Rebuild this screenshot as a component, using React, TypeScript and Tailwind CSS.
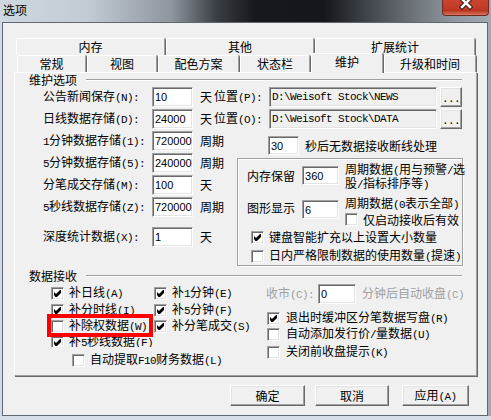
import React from "react";

function T({ s, className = "" }: { s: string; className?: string }) {
  const parts = s.split(/([\x20-\x7e]+)/).filter((p) => p.length > 0);
  return (
    <span className={"whitespace-pre " + className}>
      {parts.map((p, i) =>
        /^[\x20-\x7e]+$/.test(p) ? (
          <span key={i} className="font-['Liberation_Mono',monospace] text-[11px] tracking-[-0.6px]">
            {p}
          </span>
        ) : (
          <span key={i}>{p}</span>
        )
      )}
    </span>
  );
}

function Box({ checked }: { checked?: boolean }) {
  return (
    <span className="w-[13px] h-[13px] shrink-0 bg-white border border-t-[#a0a0a0] border-l-[#a0a0a0] border-r-white border-b-white shadow-[inset_1px_1px_0_#696969,inset_-1px_-1px_0_#e3e3e3] flex items-center justify-center">
      {checked && (
        <svg width="7" height="7" viewBox="0 0 7 7" className="block">
          <path d="M0 2 L2 4 L6 0 L7 0 L7 3 L2 8 L0 5 Z" fill="#000" />
        </svg>
      )}
    </span>
  );
}

function Chk({
  checked,
  label,
  className = "",
  gap = "ml-[5px]",
}: {
  checked?: boolean;
  label: string;
  className?: string;
  gap?: string;
}) {
  return (
    <div className={"flex items-center " + className}>
      <Box checked={checked} />
      <T s={label} className={gap} />
    </div>
  );
}

function Field({
  v,
  className = "",
  bg = "bg-white",
  mono = false,
}: {
  v: string;
  className?: string;
  bg?: string;
  mono?: boolean;
}) {
  return (
    <div
      className={
        "shrink-0 flex items-center pl-[2px] overflow-hidden border border-t-[#a0a0a0] border-l-[#a0a0a0] border-r-white border-b-white shadow-[inset_1px_1px_0_#696969,inset_-1px_-1px_0_#e3e3e3] text-black " +
        (mono
          ? "font-['Liberation_Mono',monospace] text-[11px] tracking-[-0.6px] whitespace-pre "
          : "font-['Liberation_Sans',sans-serif] text-[11px] ") +
        bg +
        " " +
        className
      }
    >
      {v}
    </div>
  );
}

function Btn({ children, className = "" }: { children: React.ReactNode; className?: string }) {
  return (
    <div
      className={
        "shrink-0 flex items-center justify-center bg-[#f0f0f0] border border-t-white border-l-white border-r-[#696969] border-b-[#696969] shadow-[inset_-1px_-1px_0_#a0a0a0,inset_1px_1px_0_#e3e3e3] " +
        className
      }
    >
      {children}
    </div>
  );
}

function Tab({ label, className = "" }: { label: string; className?: string }) {
  return (
    <div
      className={
        "shrink-0 flex justify-center pt-[1px] leading-[14px] border-t border-l border-r border-t-white border-l-white border-r-[#a0a0a0] shadow-[1px_0_0_#696969] rounded-t-[2px] " +
        className
      }
    >
      <T s={label} />
    </div>
  );
}

function GroupLabel({ text, className = "" }: { text: string; className?: string }) {
  return (
    <div className={"flex items-center h-[14px] pl-[14px] pr-[14px] " + className}>
      <T s={text} />
      <div className="ml-[9px] flex-1 h-[2px] border-t border-t-[#a0a0a0] border-b border-b-white" />
    </div>
  );
}

function Row({
  label,
  value,
  unit,
  className = "",
}: {
  label: string;
  value: string;
  unit: string;
  className?: string;
}) {
  return (
    <div className={"flex items-center h-[20px] " + className}>
      <T s={label} className="w-[109px] shrink-0" />
      <Field v={value} className="w-[41px] h-[20px]" />
      <span className="ml-[7px]">{unit}</span>
    </div>
  );
}

export default function App() {
  return (
    <div className="relative w-[491px] h-[420px] overflow-hidden flex flex-col font-['Noto_Sans_CJK_SC',sans-serif] text-[12px] leading-[14px] text-black select-none">
      {/* title bar */}
      <div className="h-[22px] shrink-0 flex items-start bg-[linear-gradient(90deg,#d0d8df_0%,#c2cad2_18%,#8e959c_35%,#3a3f45_44%,#15181c_52%,#14171b_66%,#3c4147_74%,#6c7278_84%,#8e959c_92%,#a2aab2_100%)]">
        <span className="ml-[3px] mt-[3px]">选项</span>
        <div className="ml-auto mr-[2px] w-[47px] h-[16px] rounded-b-[4px] border border-t-0 border-[#6e2a20] bg-[linear-gradient(180deg,#c9452f_0%,#c23a26_55%,#b9341f_70%,#d8765e_100%)] flex items-start justify-center">
          <svg width="14" height="10" viewBox="0 0 14 10" className="block">
            <path d="M3 -1 L11 7 M11 -1 L3 7" stroke="#3c1810" strokeWidth="4.5" strokeLinecap="square" />
            <path d="M3 -1 L11 7 M11 -1 L3 7" stroke="#ffffff" strokeWidth="2.5" strokeLinecap="square" />
          </svg>
        </div>
      </div>

      <div className="flex flex-1 min-h-0">
        <div className="w-[2px] shrink-0 bg-[#d3dce5]" />
        <div className="flex-1 flex flex-col border border-[#5f6770] bg-[#f0f0f0] pt-[15px]">
          {/* tab control */}
          <div className="ml-[11px] w-[464px] flex flex-col">
            <div className="flex h-[17px] pl-[2px]">
              <Tab label="内存" className="w-[149px] h-[17px]" />
              <Tab label="其他" className="ml-[1px] w-[148px] h-[17px]" />
              <Tab label="扩展统计" className="ml-[1px] w-[160px] h-[17px]" />
            </div>
            <div className="flex items-end h-[17px] pl-[3px]">
              <Tab label="常规" className="w-[69px] h-[17px]" />
              <Tab label="视图" className="ml-[1px] w-[70px] h-[17px]" />
              <Tab label="配色方案" className="ml-[1px] w-[81px] h-[17px]" />
              <Tab label="状态栏" className="ml-[1px] w-[70px] h-[17px]" />
              <Tab label="维护" className="relative z-10 -mb-px ml-[1px] w-[72px] h-[20px] bg-[#f0f0f0]" />
              <Tab label="升级和时间" className="ml-[1px] w-[92px] h-[17px]" />
            </div>

            {/* panel */}
            <div className="w-[463px] h-[304px] border border-t-white border-l-white border-r-[#a0a0a0] border-b-[#a0a0a0] shadow-[1px_1px_0_#696969] flex flex-col">
              <GroupLabel text="维护选项" />

              <div className="flex flex-col pl-[28px]">
                {/* row 1 */}
                <div className="flex items-center h-[20px]">
                  <T s="公告新闻保存(N):" className="w-[109px] shrink-0" />
                  <Field v="10" className="w-[41px] h-[20px]" />
                  <span className="ml-[7px]">天</span>
                  <T s="位置(P):" className="ml-[2px]" />
                  <Field v={"D:\\Weisoft Stock\\NEWS"} mono bg="bg-[#f0f0f0]" className="ml-[7px] w-[168px] h-[20px]" />
                  <Btn className="ml-[3px] w-[22px] h-[20px]">
                    <span className="font-['Liberation_Mono',monospace] text-[11px] tracking-[-0.6px] mt-[3px]">...</span>
                  </Btn>
                </div>
                {/* row 2 */}
                <div className="flex items-center h-[20px] mt-[2px]">
                  <T s="日线数据存储(D):" className="w-[109px] shrink-0" />
                  <Field v="24000" className="w-[41px] h-[20px]" />
                  <span className="ml-[7px]">天</span>
                  <T s="位置(O):" className="ml-[2px]" />
                  <Field v={"D:\\Weisoft Stock\\DATA"} mono bg="bg-[#f0f0f0]" className="ml-[7px] w-[168px] h-[20px]" />
                  <Btn className="ml-[3px] w-[22px] h-[20px]">
                    <span className="font-['Liberation_Mono',monospace] text-[11px] tracking-[-0.6px] mt-[3px]">...</span>
                  </Btn>
                </div>

                {/* section B */}
                <div className="flex mt-[2px]">
                  <div className="w-[194px] shrink-0 flex flex-col">
                    <Row label="1分钟数据存储(1):" value="720000" unit="周期" />
                    <Row label="5分钟数据存储(5):" value="240000" unit="周期" className="mt-[2px]" />
                    <Row label="分笔成交存储(M):" value="100" unit="天" className="mt-[2px]" />
                    <Row label="5秒线数据存储(Z):" value="720000" unit="周期" className="mt-[2px]" />
                    <Row label="深度统计数据(X):" value="1" unit="天" className="mt-[10px]" />
                  </div>
                  <div className="w-[226px] shrink-0 flex flex-col">
                    <div className="flex items-center mt-[5px] ml-[31px]">
                      <Field v="30" className="w-[31px] h-[19px]" />
                      <T s="秒后无数据接收断线处理" className="ml-[6px]" />
                    </div>
                    <div className="mt-[3px] h-[108px] border border-[#a0a0a0] shadow-[inset_1px_1px_0_#ffffff,1px_1px_0_#ffffff] flex flex-col pl-[9px]">
                      <div className="flex items-start mt-[7px]">
                        <T s="内存保留" className="mt-[3px]" />
                        <Field v="360" className="ml-[7px] w-[37px] h-[19px]" />
                        <div className="ml-[6px] -mt-[3px] flex flex-col leading-[12px] whitespace-nowrap">
                          <T s="周期数据(用与预警/选" />
                          <T s="股/指标排序等)" />
                        </div>
                      </div>
                      <div className="flex items-start mt-[6px]">
                        <T s="图形显示" className="mt-[4px]" />
                        <Field v="6" className="ml-[7px] mt-[3px] w-[37px] h-[19px]" />
                        <div className="ml-[6px] flex flex-col whitespace-nowrap">
                          <T s="周期数据(0表示全部)" className="leading-[12px]" />
                          <Chk label="仅启动接收后有效" className="mt-[2px] h-[13px]" gap="ml-[5px]" />
                        </div>
                      </div>
                      <Chk checked label="键盘智能扩充以上设置大小数量" className="mt-[4px] h-[14px] pl-[4px]" />
                      <Chk label="日内严格限制数据的使用数量(提速)" className="mt-[5px] h-[14px] pl-[4px]" />
                    </div>
                  </div>
                </div>
              </div>

              <GroupLabel text="数据接收" className="mt-[3px]" />

              <div className="flex pl-[36px]">
                <div className="w-[215px] shrink-0 flex flex-col">
                  <div className="flex h-[16px] mt-[2px]">
                    <Chk checked label="补日线(A)" className="w-[103px]" />
                    <Chk checked label="补1分钟(E)" />
                  </div>
                  <div className="flex h-[16px] mt-[1px]">
                    <Chk checked label="补分时线(I)" className="w-[103px]" />
                    <Chk checked label="补5分钟(F)" />
                  </div>
                  <div className="flex h-[16px]">
                    <Chk label="补除权数据(W)" className="w-[103px]" />
                    <Chk checked label="补分笔成交(S)" />
                  </div>
                  <div className="h-[12px] mt-[1px] overflow-hidden">
                    <Chk checked label="补5秒线数据(F)" className="h-[14px]" />
                  </div>
                  <Chk label="自动提取F10财务数据(L)" className="h-[16px] mt-[5px] pl-[21px]" />
                </div>
                <div className="flex flex-col">
                  <div className="flex items-center h-[20px] mt-[1px] text-[#a0a0a0]">
                    <T s="收市(C):" />
                    <Field v="0" className="ml-[4px] w-[38px] h-[20px]" />
                    <T s="分钟后自动收盘(C)" className="ml-[6px]" />
                  </div>
                  <Chk checked label="退出时缓冲区分笔数据写盘(R)" className="h-[16px] mt-[6px] pl-[1px]" gap="ml-[6px]" />
                  <Chk label="自动添加发行价/量数据(U)" className="h-[16px] pl-[1px]" gap="ml-[6px]" />
                  <Chk label="关闭前收盘提示(K)" className="h-[16px] mt-[2px] pl-[1px]" gap="ml-[6px]" />
                </div>
              </div>
            </div>
          </div>

          {/* buttons */}
          <div className="flex justify-end pr-[18px] mt-[9px]">
            <Btn className="w-[75px] h-[21px]">确定</Btn>
            <Btn className="ml-[10px] w-[74px] h-[21px]">取消</Btn>
            <Btn className="ml-[13px] w-[67px] h-[21px]">
              <T s="应用(A)" />
            </Btn>
          </div>
        </div>
        <div className="w-[3px] shrink-0 bg-[#a0abb6]" />
      </div>
      <div className="h-[4px] shrink-0 bg-[#d5dee8]" />

      {/* red annotation */}
      <div className="absolute left-[47px] top-[314px] w-[106px] h-[23px] border-4 border-[#ff0000]" />
    </div>
  );
}
